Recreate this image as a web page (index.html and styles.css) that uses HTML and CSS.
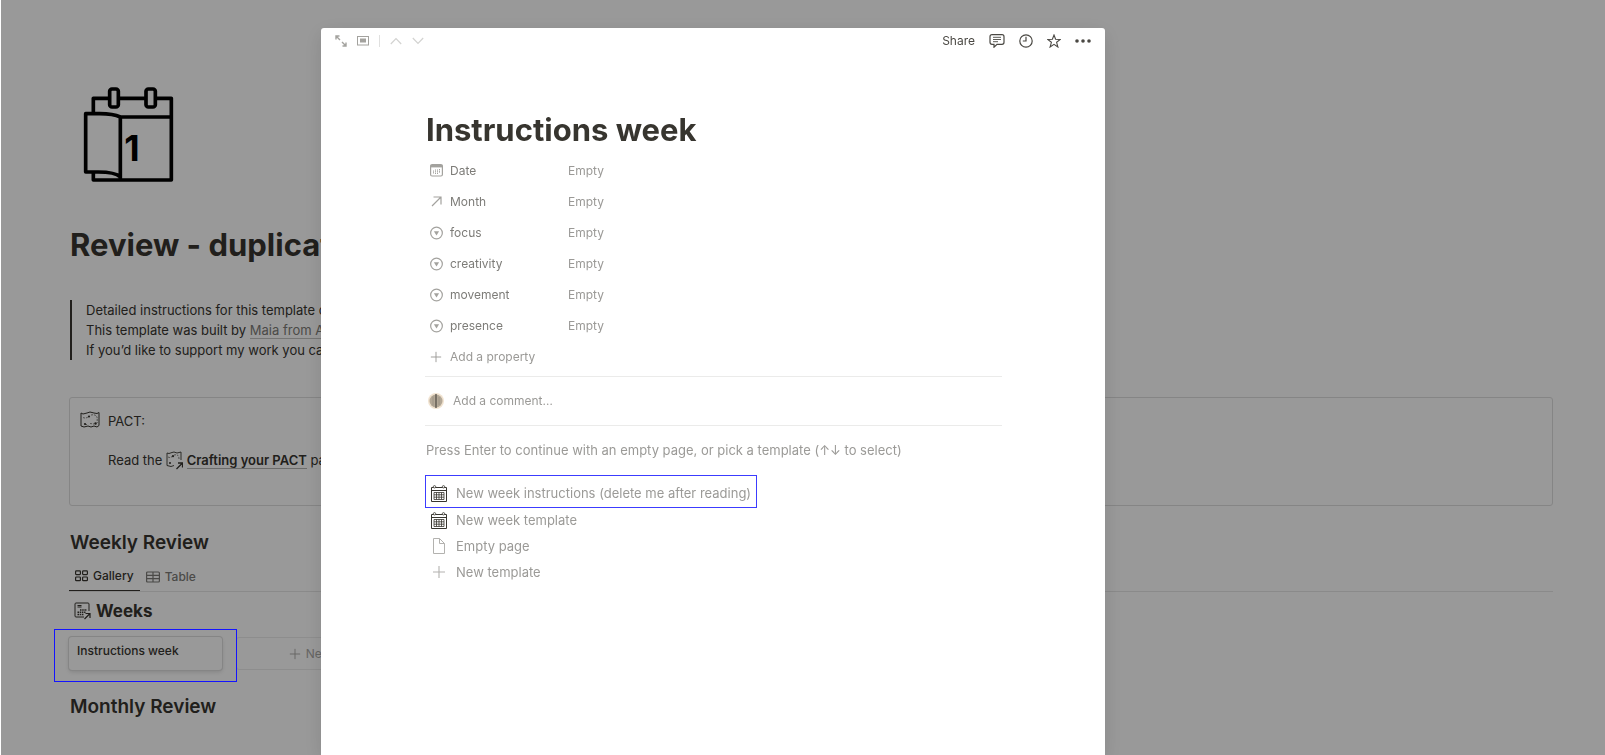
FILE: index.html
```html
<!DOCTYPE html>
<html lang="en">
<head>
  <meta charset="UTF-8" />
  <meta name="viewport" content="width=device-width, initial-scale=1.0" />
  <title>Instructions week</title>
  <link rel="stylesheet" href="styles.css">
</head>
<body>

  <!-- shared icons -->
  <svg class="sprite" aria-hidden="true">
    <symbol id="icon-select" viewBox="0 0 14 14">
      <circle cx="7" cy="7" r="6.300" fill="none" stroke="currentColor" stroke-width="1.300" />
      <path d="M4.200 5h5.600L7 9.800z" fill="currentColor" />
    </symbol>
    <symbol id="icon-plus" viewBox="0 0 14 14">
      <path d="M7 1v12M1 7h12" fill="none" stroke="currentColor" stroke-width="1.100" />
    </symbol>
    <symbol id="icon-map" viewBox="0 0 20 18">
      <path d="M1 2l2 1 4-1 3-1 4 1 3 .5 2-1v13l-2 1.500-3-1-3 1-3-1-4 1-3-1z" fill="none" stroke="currentColor" />
      <path d="M3 6.500c2 1 4 .5 6-1M11 4c4-1 6.500 1 6.200 4M17.200 8v4M5 13.500h3M10 12.500l4 .5" fill="none" stroke="currentColor" stroke-dasharray="2 1" stroke-width=".6" />
      <circle cx="9" cy="5.500" r="1.100" fill="currentColor" />
      <circle cx="5" cy="13" r="1.100" fill="currentColor" />
      <circle cx="15.500" cy="12.500" r="1.200" fill="currentColor" />
    </symbol>
    <symbol id="icon-calendar" viewBox="0 0 16 17">
      <path d="M.5 2.500h15v14H.5zM.5 5.500h15" fill="none" stroke="currentColor" />
      <circle cx="3.500" cy="1.800" r="1.200" fill="#fff" stroke="currentColor" stroke-width=".8" />
      <circle cx="12.500" cy="1.800" r="1.200" fill="#fff" stroke="currentColor" stroke-width=".8" />
      <path d="M3 7.500h10v7H3zM3 9.800h10M3 12.200h10M5.500 7.500v7M8 7.500v7M10.500 7.500v7" fill="none" stroke="currentColor" stroke-width=".8" />
    </symbol>
  </svg>

  <main class="page">
    <svg class="page-icon" viewBox="0 0 273 288" aria-hidden="true">
      <g fill="none" stroke="#000" stroke-width="11" stroke-linejoin="round">
        <path d="M31 80V34H80M106 34H189M217 34H265V279H31V255" />
        <rect x="80" y="6" width="26" height="54" rx="7" />
        <rect x="189" y="6" width="28" height="54" rx="7" />
        <path d="M112 279V90C95 82 75 80 50 80H8V255H45C75 255 100 258 112 270M112 90H265" />
      </g>
      <text class="page-icon-day" x="124" y="223">1</text>
    </svg>

    <h1 class="page-title">Review - duplicate</h1>

    <blockquote class="quote">
      Detailed instructions for this template can<br>
      This template was built by <a href="#">Maia from A Life</a><br>
      If you’d like to support my work you can
    </blockquote>

    <section class="callout">
      <svg class="callout-icon" aria-hidden="true"><use href="#icon-map" /></svg>
      <div>
        <p>PACT:</p>
        <p>Read the
          <svg class="link-icon" viewBox="0 0 18 19" aria-hidden="true">
            <path d="M9 14.500l-3 1-4-1V2l2 .5 3-1 2-.5 3 1 4-1v8" fill="none" stroke="currentColor" stroke-width=".9" />
            <path d="M3 6c2 1 3 .5 4-.5M9 4c4-1 5 1 5 4" fill="none" stroke="currentColor" stroke-width=".6" stroke-dasharray="2 1" />
            <circle cx="8" cy="5.200" r="1.100" fill="currentColor" />
            <circle cx="5" cy="12" r="1" fill="currentColor" />
            <path d="M11.500 18l5.500-5.500M13 12h4.500v4.500" fill="none" stroke="currentColor" stroke-width="1.300" />
          </svg>
          <a class="page-link" href="#">Crafting your PACT</a> page</p>
      </div>
    </section>

    <h2 class="section-title">Weekly Review</h2>
    <nav class="views">
      <button class="view active">
        <svg width="13" height="12" viewBox="0 0 13 12" aria-hidden="true">
          <g fill="none" stroke="currentColor" stroke-width="1.200">
            <rect x=".6" y=".9" width="4.800" height="3.700" rx=".8" /><rect x="7.600" y=".9" width="4.800" height="3.700" rx=".8" />
            <rect x=".6" y="7" width="4.800" height="3.700" rx=".8" /><rect x="7.600" y="7" width="4.800" height="3.700" rx=".8" />
          </g>
        </svg>
        Gallery
      </button>
      <button class="view">
        <svg width="14" height="12" viewBox="0 0 14 12" aria-hidden="true">
          <path d="M1.600 1h10.800q1 0 1 1v8q0 1-1 1H1.600q-1 0-1-1V2q0-1 1-1zM.6 4.300h12.800M.6 7.600h12.800M7 1v10" fill="none" stroke="currentColor" stroke-width="1.200" />
        </svg>
        Table
      </button>
    </nav>

    <h3 class="db-title">
      <svg width="17" height="18" viewBox="0 0 17 18" aria-hidden="true">
        <path d="M15 9V2q0-1-1-1H2Q1 1 1 2v12q0 1 1 1h8" fill="none" stroke="currentColor" />
        <path d="M3.500 3.500h4M3.500 5h4" stroke="currentColor" stroke-width="1" />
        <path d="M6 8h7M3.500 10.300h8M3.500 12.600h6" stroke="currentColor" stroke-width="1.500" stroke-dasharray="1.500 .7" />
        <path d="M10.500 17l5-5M11.500 11.500H16V16" fill="none" stroke="currentColor" stroke-width="1.200" />
      </svg>
      Weeks
    </h3>

    <div class="gallery">
      <a class="card" href="#">Instructions week</a>
      <button class="card-new">
        <svg width="12" height="12" aria-hidden="true"><use href="#icon-plus" /></svg>
        New
      </button>
    </div>

    <h2 class="section-title">Monthly Review</h2>
  </main>

  <div class="overlay">
    <div class="modal" role="dialog" aria-labelledby="modal-title">
      <header class="topbar">
        <button class="icon-btn" aria-label="Open as full page">
          <svg width="12" height="12" viewBox="0 0 12 12">
            <path d="M1 4.500V1h3.500M1 1l4 4M11 7.500V11H7.500M11 11L7 7" fill="none" stroke="currentColor" stroke-width="1.400" />
          </svg>
        </button>
        <button class="icon-btn" aria-label="Switch peek mode">
          <svg width="12" height="10" viewBox="0 0 12 10">
            <rect x=".5" y=".5" width="11" height="8.500" fill="none" stroke="currentColor" />
            <rect x="3" y="2.500" width="6" height="4" fill="currentColor" />
          </svg>
        </button>
        <span class="divider"></span>
        <button class="icon-btn faint" aria-label="Previous page">
          <svg width="12" height="8" viewBox="0 0 12 8"><path d="M.8 7L6 1.500 11.200 7" fill="none" stroke="currentColor" stroke-width="1.200" /></svg>
        </button>
        <button class="icon-btn faint" aria-label="Next page">
          <svg width="12" height="8" viewBox="0 0 12 8"><path d="M.8 1L6 6.500 11.200 1" fill="none" stroke="currentColor" stroke-width="1.200" /></svg>
        </button>

        <div class="actions">
          <button class="share">Share</button>
          <button class="icon-btn" aria-label="Comments">
            <svg width="16" height="14" viewBox="0 0 16 14">
              <path d="M3 .7h10q2 0 2 2v5.600q0 2-2 2H8l-3 2.900v-2.900H3q-2 0-2-2V2.700q0-2 2-2z" fill="none" stroke="currentColor" stroke-width="1.200" />
              <path d="M4 3.300h8M4 5.500h8M4 7.700h5" stroke="currentColor" stroke-width=".9" />
            </svg>
          </button>
          <button class="icon-btn" aria-label="Updates">
            <svg width="14" height="14" viewBox="0 0 14 14">
              <circle cx="7" cy="7" r="6.200" fill="none" stroke="currentColor" stroke-width="1.200" />
              <path d="M7 2.800V7H3.800" fill="none" stroke="currentColor" stroke-width="1.200" />
            </svg>
          </button>
          <button class="icon-btn" aria-label="Favorite">
            <svg width="14" height="14" viewBox="0 0 14 14">
              <path d="M7 1l1.600 4.200 4.700.2-3.700 2.900 1.300 4.700L7 10.300l-3.900 2.700 1.300-4.700L.7 5.400l4.700-.2z" fill="none" stroke="currentColor" stroke-width="1.100" />
            </svg>
          </button>
          <button class="icon-btn" aria-label="More">
            <svg width="16" height="4" viewBox="0 0 16 4" fill="currentColor">
              <circle cx="2" cy="2" r="1.800" /><circle cx="8" cy="2" r="1.800" /><circle cx="14" cy="2" r="1.800" />
            </svg>
          </button>
        </div>
      </header>

      <div class="content">
        <h1 class="modal-title" id="modal-title">Instructions week</h1>

        <dl class="properties">
          <div class="property">
            <dt>
              <svg width="13" height="13" viewBox="0 0 13 13" aria-hidden="true">
                <rect x=".6" y=".6" width="11.800" height="11.400" rx="1.500" fill="none" stroke="currentColor" stroke-width="1.200" />
                <path d="M.6 2.200h11.800" stroke="currentColor" stroke-width="2.400" />
                <path d="M3.500 6.500v3.500M5.500 5.500v4.500M7.500 5.500v4.500M9.500 5v4" stroke="currentColor" stroke-dasharray="1.200 .5" />
              </svg>
              Date
            </dt>
            <dd>Empty</dd>
          </div>
          <div class="property">
            <dt>
              <svg width="13" height="13" viewBox="0 0 13 13" aria-hidden="true">
                <path d="M2 11L10.500 2.500M3.500 2h7.500v7.500" fill="none" stroke="currentColor" stroke-width="1.200" />
              </svg>
              Month
            </dt>
            <dd>Empty</dd>
          </div>
          <div class="property">
            <dt><svg width="13" height="14" aria-hidden="true"><use href="#icon-select" /></svg>focus</dt>
            <dd>Empty</dd>
          </div>
          <div class="property">
            <dt><svg width="13" height="14" aria-hidden="true"><use href="#icon-select" /></svg>creativity</dt>
            <dd>Empty</dd>
          </div>
          <div class="property">
            <dt><svg width="13" height="14" aria-hidden="true"><use href="#icon-select" /></svg>movement</dt>
            <dd>Empty</dd>
          </div>
          <div class="property">
            <dt><svg width="13" height="14" aria-hidden="true"><use href="#icon-select" /></svg>presence</dt>
            <dd>Empty</dd>
          </div>
        </dl>
        <button class="add-property">
          <svg width="12" height="12" aria-hidden="true"><use href="#icon-plus" /></svg>
          Add a property
        </button>

        <div class="comment">
          <svg class="avatar" viewBox="0 0 16 16" aria-hidden="true">
            <circle cx="8" cy="8" r="8" fill="#f1e3d0" />
            <circle cx="8" cy="8" r="6.500" fill="#b3a897" />
            <path d="M8 1v14" stroke="#4f4a44" stroke-width="1.200" />
            <path d="M5 3.500v9M11 4v8" stroke="#978d80" stroke-width=".8" />
          </svg>
          <input type="text" placeholder="Add a comment…" aria-label="Add a comment" />
        </div>

        <p class="hint">Press Enter to continue with an empty page, or pick a template (↑↓ to select)</p>

        <div class="templates">
          <button class="template marked">
            <svg class="dark" width="16" height="17" aria-hidden="true"><use href="#icon-calendar" /></svg>
            New week instructions (delete me after reading)
          </button>
          <button class="template">
            <svg class="dark" width="16" height="17" aria-hidden="true"><use href="#icon-calendar" /></svg>
            New week template
          </button>
          <button class="template">
            <svg class="light" width="16" height="16" viewBox="0 0 16 16" aria-hidden="true">
              <path d="M2.500.5h6l5 5v10h-11zM8.500.5v5h5" fill="none" stroke="currentColor" />
            </svg>
            Empty page
          </button>
          <button class="template">
            <svg class="light" width="16" height="14" aria-hidden="true"><use href="#icon-plus" /></svg>
            New template
          </button>
        </div>
      </div>
    </div>
  </div>

</body>
</html>
```

FILE: styles.css
```css
* {
  box-sizing: border-box;
}

body {
  margin: 0;
  height: 100vh;
  overflow: hidden;
  background: #fff;
  color: #37352f;
  font-family: Inter, "Liberation Sans", sans-serif;
  font-size: 13px;
  line-height: 20px;
}

h1, h2, h3, p, dl, dd, blockquote {
  margin: 0;
}

button {
  display: flex;
  align-items: center;
  padding: 0;
  border: none;
  background: none;
  color: inherit;
  font: inherit;
  cursor: pointer;
}

svg {
  flex: none;
}

.sprite {
  position: absolute;
  width: 0;
  height: 0;
}

/* page behind the modal */

.page {
  padding: 87px 52px 0 69px;
}

.page-icon {
  display: block;
  width: 91px;
  height: 96px;
  margin-left: 14px;
}

.page-icon-day {
  font-size: 107px;
  font-weight: bold;
}

.page-title {
  margin: 42px 0 35px 1px;
  font-size: 31px;
  line-height: 40px;
  white-space: nowrap;
}

.quote {
  margin-left: 1px;
  padding-left: 14px;
  border-left: 2px solid #37352f;
}

.quote a {
  color: #7d7c78;
  text-decoration: none;
  border-bottom: 1px solid #c4c4c2;
}

.callout {
  display: flex;
  gap: 8px;
  margin-top: 37px;
  padding: 13px 10px 35px;
  border: 1px solid #dedede;
  border-radius: 3px;
}

.callout p + p {
  margin-top: 19px;
}

.callout-icon {
  width: 20px;
  height: 18px;
}

.link-icon {
  width: 18px;
  height: 19px;
  margin-left: -1px;
  vertical-align: -5px;
}

.page-link {
  color: inherit;
  font-weight: 600;
  text-decoration: none;
  border-bottom: 1px solid #b5b5b3;
}

.section-title {
  margin: 24px 0 0 1px;
  font-size: 19px;
  font-weight: 600;
  line-height: 26px;
}

.views {
  display: flex;
  margin-top: 6px;
  border-bottom: 1px solid #e6e6e6;
}

.view {
  gap: 5px;
  height: 29px;
  padding: 0 6px;
  color: #7d7c78;
  font-size: 12px;
  font-weight: 500;
}

.view.active {
  margin-bottom: -1px;
  border-bottom: 1px solid #37352f;
  color: #37352f;
}

.db-title {
  display: flex;
  align-items: center;
  gap: 5px;
  margin: 7px 0 14px 5px;
  font-size: 17px;
  font-weight: 700;
  line-height: 24px;
}

.gallery {
  display: flex;
  gap: 14px;
}

.card {
  position: relative;
  width: 153px;
  height: 33px;
  padding: 4px 8px;
  border-radius: 3px;
  box-shadow: 0 0 0 1px #dedede, 0 2px 4px #dcdcdc;
  color: inherit;
  font-size: 12px;
  font-weight: 500;
  text-decoration: none;
}

/* highlight frame, stays above the dimmed page */
.card::after {
  content: "";
  position: absolute;
  inset: -8px -15px -12px;
  z-index: 2;
  border: 1px solid #1414ff;
}

.card-new {
  justify-content: center;
  gap: 5px;
  width: 148px;
  border: 1px solid #ececec;
  border-radius: 3px;
  color: #aaa9a6;
  font-size: 12px;
}

/* modal */

.overlay {
  position: fixed;
  inset: 0 0 0 1px;
  z-index: 1;
  padding: 28px 20px 0 calc(20% - 1px);
  background: rgba(0, 0, 0, 0.4);
}

.modal {
  width: 100%;
  max-width: 784px;
  height: 100%;
  border-radius: 3px 3px 0 0;
  background: #fff;
  box-shadow: 0 5px 20px rgba(0, 0, 0, 0.12);
}

.topbar {
  display: flex;
  align-items: center;
  gap: 10px;
  height: 26px;
  padding: 0 14px;
  color: #a3a29e;
}

.divider {
  width: 1px;
  height: 12px;
  background: #e0e0df;
}

.faint {
  color: #d3d3d1;
}

.actions {
  display: flex;
  align-items: center;
  gap: 14px;
  margin-left: auto;
  color: #4a4843;
}

.share {
  font-size: 12px;
}

.content {
  padding: 56px 103px 0 104px;
}

.modal-title {
  padding-left: 1px;
  font-size: 31px;
  line-height: 40px;
}

.properties {
  margin-top: 5px;
}

.property {
  display: flex;
  align-items: center;
  height: 31px;
  padding-left: 5px;
  color: #9b9a97;
  font-size: 12px;
}

.property dt {
  display: flex;
  align-items: center;
  gap: 7px;
  width: 138px;
  color: #7d7c78;
}

.property svg {
  color: #a3a29e;
}

.add-property {
  gap: 8px;
  height: 31px;
  padding-left: 5px;
  color: #9b9a97;
  font-size: 12px;
}

.comment {
  display: flex;
  align-items: center;
  gap: 9px;
  height: 50px;
  margin-top: 4px;
  padding-left: 3px;
  border: solid #ebebea;
  border-width: 1px 0;
}

.avatar {
  width: 16px;
  height: 16px;
}

.comment input {
  flex: 1;
  padding: 0;
  border: none;
  outline: none;
  background: none;
  font: inherit;
  font-size: 12px;
}

.comment input::placeholder {
  color: #9b9a97;
}

.hint {
  margin-top: 14px;
  padding-left: 1px;
  color: #9b9a97;
}

.templates {
  display: flex;
  flex-direction: column;
  align-items: flex-start;
  margin-top: 15px;
}

.template {
  gap: 9px;
  height: 26px;
  padding: 0 5px;
  border: 1px solid transparent;
  color: #9b9a97;
}

.template.marked {
  height: 33px;
  margin-bottom: -1px;
  padding-top: 3px;
  border-color: #3c3cff;
}

.template .dark {
  color: #37352f;
}

.template .light {
  color: #b3b2af;
}
```
